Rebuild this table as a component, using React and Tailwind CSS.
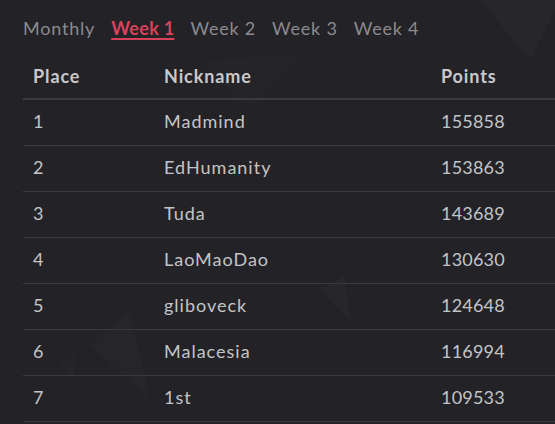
import React from 'react';

const tabs = ['Monthly', 'Week 1', 'Week 2', 'Week 3', 'Week 4'];

const rows = [
    [1, 'Madmind', 155858],
    [2, 'EdHumanity', 153863],
    [3, 'Tuda', 143689],
    [4, 'LaoMaoDao', 130630],
    [5, 'gliboveck', 124648],
    [6, 'Malacesia', 116994],
    [7, '1st', 109533],
];

const Backdrop = () => (
    <svg className="absolute inset-0 pointer-events-none" width="555" height="424" viewBox="0 0 555 424">
        <polygon points="480,0 560,0 530,60" fill="#27262b" />
        <polygon points="200,60 300,55 250,110" fill="#252429" />
        <polygon points="90,345 130,310 150,400" fill="#262529" />
        <polygon points="320,290 345,275 350,320" fill="#27262b" />
        <polygon points="60,365 78,352 72,380" fill="#262529" />
    </svg>
);

export default function App() {
    return (
        <div className="relative w-[555px] h-[424px] overflow-hidden bg-[#232227]" style={{ fontFamily: 'Lato, "Open Sans", sans-serif' }}>
            <Backdrop />
            <div className="relative pl-[23px]">
                <div className="flex gap-[16px] h-[56px] pt-[15px] text-[18px] leading-[26px] tracking-[0.8px]">
                    {tabs.map((t, i) => (
                        <span key={t} className={i === 1 ? 'text-[#d8415a] font-bold tracking-[0.3px] underline underline-offset-[3px] decoration-[1.5px]' : 'text-[#8b8a8f]'}>{t}</span>
                    ))}
                </div>
                <div className="grid grid-cols-[141px_277px_1fr] h-[44px] pb-[2px] items-center border-b-2 border-[#3b3a3f] text-[18px] tracking-[0.9px] font-bold text-[#c9c9cb]">
                    <div className="pl-[10px]">Place</div>
                    <div>Nickname</div>
                    <div>Points</div>
                </div>
                {rows.map(([p, n, pts]) => (
                    <div key={p} className="grid grid-cols-[141px_277px_1fr] h-[46px] pb-[2px] items-center border-b border-[#3a393e] text-[18px] text-[#c4c4c6]">
                        <div className="pl-[10px] tracking-[0.2px]">{p}</div>
                        <div className="tracking-[1px]">{n}</div>
                        <div className="tracking-[0.2px]">{pts}</div>
                    </div>
                ))}
            </div>
        </div>
    );
}
